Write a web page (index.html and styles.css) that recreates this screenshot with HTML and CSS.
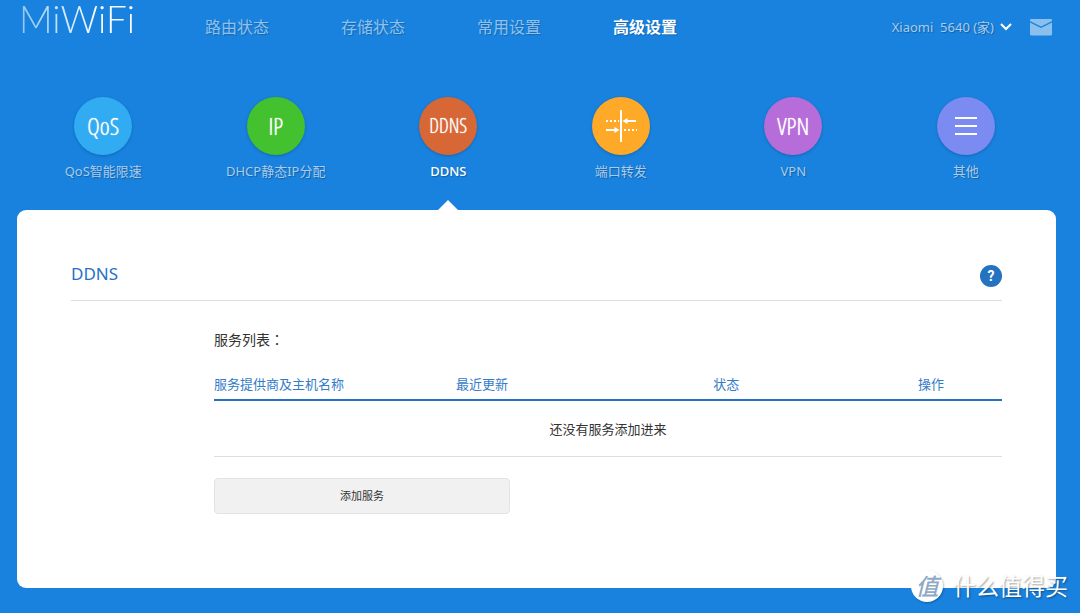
FILE: index.html
```html
<!DOCTYPE html>
<html lang="zh-CN">
<head>
<meta charset="utf-8">
<meta name="viewport" content="width=device-width, initial-scale=1">
<title>MiWiFi</title>
<link rel="stylesheet" href="styles.css">
</head>
<body>
<header class="topbar">
  <a class="brand" href="#">MiWiFi</a>
  <nav class="nav">
    <a class="nav-link" href="#">路由状态</a>
    <a class="nav-link" href="#">存储状态</a>
    <a class="nav-link" href="#">常用设置</a>
    <a class="nav-link is-active" href="#">高级设置</a>
  </nav>
  <div class="account">
    <button class="router" type="button">
      <span>Xiaomi&nbsp; 5640 (家)</span>
      <svg width="12" height="8" viewBox="0 0 12 8" fill="none" stroke="#fff" stroke-width="2"><path d="M1 1l5 5 5-5"/></svg>
    </button>
    <button class="mail" type="button" aria-label="消息">
      <svg width="22" height="17" viewBox="0 0 22 17"><path fill="#8bc0ee" d="M1 0h20a1 1 0 0 1 1 1v1L11 7.500 0 2V1a1 1 0 0 1 1-1zM0 3.500l11 5.500 11-5.500V15a1.500 1.500 0 0 1-1.500 1.500h-19A1.500 1.500 0 0 1 0 15z"/></svg>
    </button>
  </div>
</header>

<nav class="features">
  <a class="feature" href="#"><span class="disc disc-qos">QoS</span><span>QoS智能限速</span></a>
  <a class="feature" href="#"><span class="disc disc-ip">IP</span><span>DHCP静态IP分配</span></a>
  <a class="feature is-current" href="#"><span class="disc disc-ddns">DDNS</span><span>DDNS</span></a>
  <a class="feature" href="#"><span class="disc disc-port">
    <svg width="32" height="34" viewBox="0 0 32 34" fill="none" stroke="#fff">
      <path stroke-width="2" d="M16 1v32"/>
      <path stroke-width="2" d="M20 12h11M1 21h11"/>
      <path stroke-width="2" stroke-dasharray="2 2" d="M1 12h13M19 21h13"/>
      <path fill="#fff" stroke="none" d="M17.500 12l5-3v6zM14.500 21l-5-3v6z"/>
    </svg></span><span>端口转发</span></a>
  <a class="feature" href="#"><span class="disc disc-vpn">VPN</span><span>VPN</span></a>
  <a class="feature" href="#"><span class="disc disc-more">
    <svg width="22" height="20" viewBox="0 0 22 20" stroke="#fff" stroke-width="2"><path d="M0 2h22M0 10h22M0 18h22"/></svg></span><span>其他</span></a>
</nav>

<main class="panel">
  <div class="panel-head">
    <h1 class="panel-title">DDNS</h1>
    <button class="help" type="button" aria-label="帮助">?</button>
  </div>
  <section class="services">
    <h2 class="services-title">服务列表<span class="colon" lang="zh-TW">：</span></h2>
    <table class="table">
      <thead>
        <tr><th class="col-name">服务提供商及主机名称</th><th class="col-update">最近更新</th><th class="col-state">状态</th><th class="col-action">操作</th></tr>
      </thead>
      <tbody>
        <tr><td colspan="4">还没有服务添加进来</td></tr>
      </tbody>
    </table>
    <button class="add" type="button">添加服务</button>
  </section>
</main>

<div class="watermark"><span class="seal">值</span><span>什么值得买</span></div>
</body>
</html>
```

FILE: styles.css
```css
* {
  box-sizing: border-box;
}

body {
  display: flex;
  flex-direction: column;
  min-height: 100vh;
  margin: 0;
  background: #1882de;
  color: #333;
  font: 13px/20px "Noto Sans", "Noto Sans CJK SC", sans-serif;
}

a {
  color: inherit;
  text-decoration: none;
}

button {
  padding: 0;
  border: 0;
  background: none;
  color: inherit;
  font: inherit;
  cursor: pointer;
}

.topbar {
  display: flex;
  align-items: flex-start;
  height: 54px;
  padding: 0 28px 0 19px;
}

.brand {
  width: 150px;
  background: linear-gradient(90deg, #8fc6f3 0, #fff 80px);
  background-clip: text;
  color: transparent;
  font: 300 37px/38px Lato, sans-serif;
}

.nav {
  display: flex;
  padding-top: 15px;
}

.nav-link {
  width: 136px;
  color: #8fc1ee;
  font-size: 16px;
  line-height: 24px;
  text-align: center;
  text-shadow: 1px 1px 1px rgba(0, 0, 0, .2);
}

.nav-link.is-active {
  color: #fff;
  font-weight: 700;
}

.account {
  display: flex;
  align-items: center;
  gap: 18px;
  margin-left: auto;
  padding-top: 17px;
}

.router {
  display: flex;
  align-items: center;
  gap: 6px;
  color: #a9cbed;
  text-shadow: 1px 1px 1px rgba(0, 0, 0, .25);
}

.mail,
.mail svg {
  display: block;
}

.features {
  display: grid;
  grid-template-columns: repeat(6, 1fr);
  padding: 43px 28px 0 17px;
}

.feature {
  position: relative;
  display: flex;
  flex-direction: column;
  align-items: center;
  gap: 6px;
  padding-bottom: 29px;
  color: #a9cbed;
  text-shadow: 1px 1px 1px rgba(0, 0, 0, .25);
}

.feature.is-current {
  color: #fff;
  font-weight: 500;
}

.feature.is-current::after {
  position: absolute;
  bottom: 0;
  border: 10px solid transparent;
  border-top: 0;
  border-bottom: 10px solid #fff;
  content: "";
}

.disc {
  display: flex;
  align-items: center;
  justify-content: center;
  width: 58px;
  height: 58px;
  border-radius: 50%;
  box-shadow: 0 1px 3px rgba(0, 0, 0, .2);
  color: #fff;
  font: 300 24px/28px "Open Sans Condensed Light", "Roboto Condensed", Roboto, sans-serif;
  text-shadow: 0 0 1px #fff;
}

.disc-qos { background: #31acf3; }
.disc-ip { background: #43c12f; }
.disc-ddns {
  background: #d76735;
  font-size: 20px;
}
.disc-port { background: #ffa928; }
.disc-vpn { background: #b66cd9; }
.disc-more { background: #7b8bf2; }

.panel {
  flex: 1;
  margin: 0 24px 25px 17px;
  padding: 49px 54px 74px;
  border-radius: 9px;
  background: #fff;
}

.panel-head {
  display: flex;
  align-items: center;
  justify-content: space-between;
  padding-bottom: 11px;
  border-bottom: 1px solid #ddd;
}

.panel-title {
  margin: 0;
  color: #2572c1;
  font-size: 17px;
  font-weight: 400;
  line-height: 30px;
}

.help {
  width: 22px;
  height: 22px;
  margin-top: 3px;
  border-radius: 50%;
  background: #2572c1;
  color: #fff;
  font: 700 14px/22px Roboto, sans-serif;
}

.services {
  padding: 26px 0 0 143px;
}

.services-title {
  margin: 0 0 20px;
  font-size: 14px;
  font-weight: 400;
  line-height: 24px;
}

.colon {
  font-family: "Noto Sans CJK TC", sans-serif;
}

.table {
  width: 100%;
  border-collapse: collapse;
  table-layout: fixed;
}

.table th {
  padding: 2px 0 5px;
  border-bottom: 2px solid #2572c1;
  color: #347cc8;
  font-weight: 400;
  white-space: nowrap;
}

.table .col-name {
  width: 20%;
  text-align: left;
}

.col-update { width: 28%; }
.col-state { width: 34%; }
.col-action { width: 18%; }

.table td {
  padding: 18px 0 17px;
  border-bottom: 1px solid #ddd;
  text-align: center;
}

.add {
  width: 296px;
  max-width: 100%;
  margin-top: 21px;
  border: 1px solid #e3e3e3;
  border-radius: 4px;
  background: #f1f1f1;
  font-size: 11px;
  line-height: 34px;
}

.watermark {
  position: absolute;
  right: 12px;
  bottom: 11px;
  display: flex;
  align-items: center;
  gap: 10px;
  color: #fff;
  font-size: 23px;
  line-height: 32px;
  text-shadow: 1px 1px 2px rgba(0, 0, 0, .4);
}

.seal {
  width: 32px;
  height: 32px;
  border-radius: 50%;
  background: #fff;
  box-shadow: 1px 1px 2px rgba(0, 0, 0, .25);
  color: #8fa9c4;
  font-style: italic;
  font-weight: 500;
  text-align: center;
  text-shadow: none;
}
```
